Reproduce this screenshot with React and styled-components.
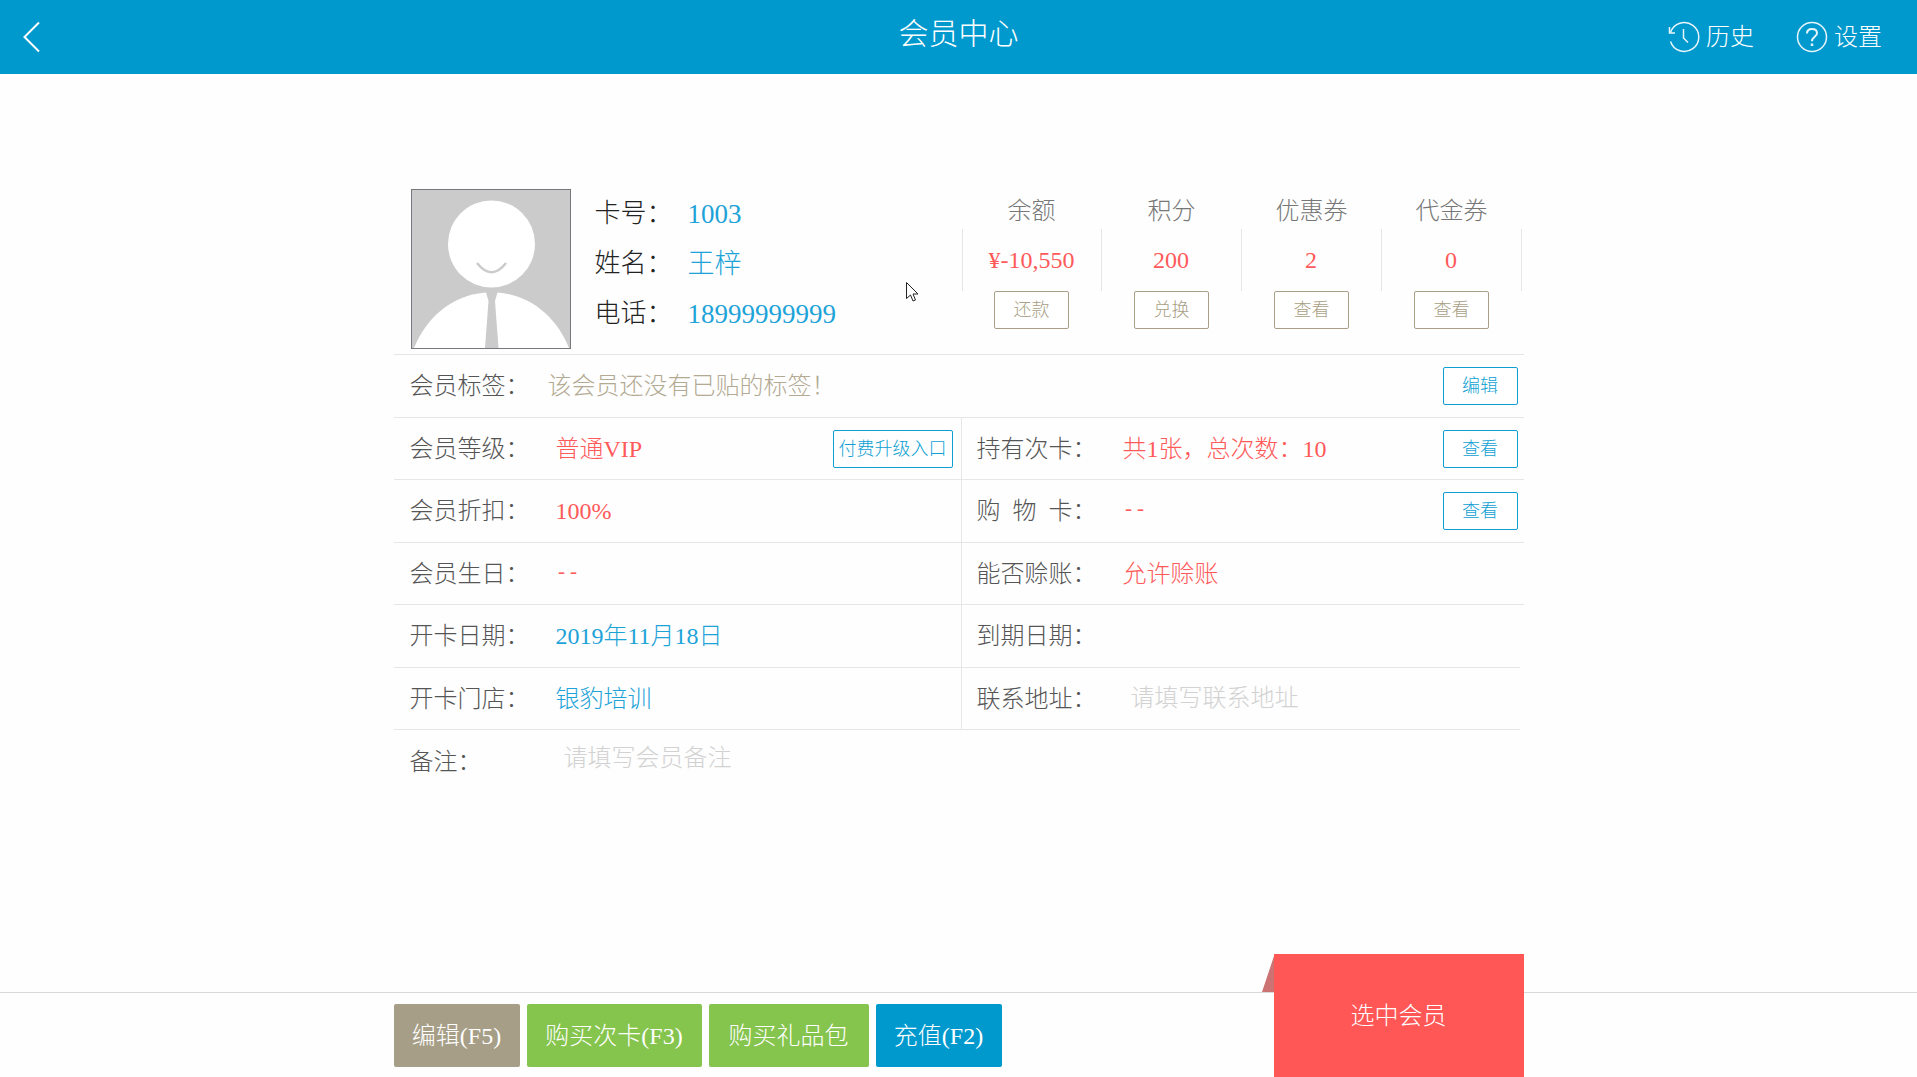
import styled, { createGlobalStyle } from "styled-components";

const GlobalStyles = createGlobalStyle`
  * {
    box-sizing: border-box;
  }
  html, body, #root {
    height: 100%;
  }
  body {
    margin: 0;
    background: #fefefe;
    color: #555;
    font-family: "Liberation Serif", "Noto Sans CJK SC", serif;
    font-size: 24px;
    font-weight: 300;
    line-height: 36px;
  }
  button, input, textarea {
    font: inherit;
    cursor: pointer;
  }
`;

const stats = [
  { title: "余额", value: "¥-10,550", action: "还款" },
  { title: "积分", value: "200", action: "兑换" },
  { title: "优惠券", value: "2", action: "查看" },
  { title: "代金券", value: "0", action: "查看" },
];

const BackIcon = () => (
  <svg width="18" height="32" viewBox="0 0 18 32" fill="none" stroke="#fff" strokeWidth="2">
    <path d="M16 1.500 1.500 16 16 30.500" />
  </svg>
);

const HistoryIcon = () => (
  <svg width="32" height="32" viewBox="0 0 32 32" fill="none" stroke="#e8f6fc" strokeWidth="1.500">
    <path d="M2.500 11.500A14.500 14.500 0 1 1 2.500 20.500" />
    <path d="M1.500 6v6h5.500" />
    <path d="M15.500 8v9l4.500 4.500" />
  </svg>
);

const HelpIcon = () => (
  <svg width="32" height="32" viewBox="0 0 32 32" fill="none" stroke="#e8f6fc" strokeWidth="1.500">
    <circle cx="16" cy="16" r="14.500" />
    <path d="M11 12.500c0-3 2-4.500 5-4.500s5 1.700 5 4.200c0 3.600-5 3.700-5 8" strokeWidth="2" />
    <path d="M16 22.500v2.500" strokeWidth="2.500" />
  </svg>
);

const Avatar = () => (
  <Photo viewBox="0 0 160 160" role="img" aria-label="会员头像">
    <rect width="160" height="160" fill="#cbcbcb" />
    <circle cx="80.500" cy="55" r="43.500" fill="#fff" />
    <path d="M66 74Q80.500 92.500 95 74" fill="none" stroke="#cbcbcb" strokeWidth="2.500" />
    <path d="M3 159C16 127 42 106 75 103.500L77.500 112 74 159Z" fill="#fff" />
    <path d="M158 159C145 127 119 106 86.500 103.500L84 112 87.500 159Z" fill="#fff" />
    <rect x="0.500" y="0.500" width="159" height="159" fill="none" stroke="#77777d" />
  </Photo>
);

const App = () => {
  return (
    <Page>
      <GlobalStyles />
      <Header>
        <IconButton aria-label="返回">
          <BackIcon />
        </IconButton>
        <Title>会员中心</Title>
        <HeaderLinks>
          <IconButton>
            <HistoryIcon />
            历史
          </IconButton>
          <IconButton>
            <HelpIcon />
            设置
          </IconButton>
        </HeaderLinks>
      </Header>

      <Main>
        <Profile>
          <Avatar />
          <Identity>
            <dt>卡号：</dt>
            <dd>1003</dd>
            <dt>姓名：</dt>
            <dd>王梓</dd>
            <dt>电话：</dt>
            <dd>18999999999</dd>
          </Identity>
          <Stats>
            {stats.map((stat) => (
              <Stat key={stat.title}>
                <span>{stat.title}</span>
                <StatValue>{stat.value}</StatValue>
                <SmallButton $color="#a89f86">{stat.action}</SmallButton>
              </Stat>
            ))}
          </Stats>
          <Pointer viewBox="0 0 13 20">
            <path d="M.5.500v16l4-3.500 2.500 6 2.500-1-2.500-6h5Z" fill="#fff" stroke="#222" />
          </Pointer>
        </Profile>

        <Row>
          <Cell>
            <TagLabel>会员标签：</TagLabel>
            <Value $color="#b3aa93">该会员还没有已贴的标签！</Value>
            <SmallButton $color="#0f9fd3">编辑</SmallButton>
          </Cell>
        </Row>
        <Row>
          <Cell>
            <Label>会员等级：</Label>
            <Value>普通VIP</Value>
            <SmallButton $color="#0f9fd3">付费升级入口</SmallButton>
          </Cell>
          <Cell>
            <Label>持有次卡：</Label>
            <Value>共1张，总次数：10</Value>
            <SmallButton $color="#0f9fd3">查看</SmallButton>
          </Cell>
        </Row>
        <Row>
          <Cell>
            <Label>会员折扣：</Label>
            <Value>100%</Value>
          </Cell>
          <Cell>
            <Label>购  物  卡：</Label>
            <Value $dash>--</Value>
            <SmallButton $color="#0f9fd3">查看</SmallButton>
          </Cell>
        </Row>
        <Row>
          <Cell>
            <Label>会员生日：</Label>
            <Value $dash>--</Value>
          </Cell>
          <Cell>
            <Label>能否赊账：</Label>
            <Value>允许赊账</Value>
          </Cell>
        </Row>
        <Row>
          <Cell>
            <Label>开卡日期：</Label>
            <Value $color="#1da3d8">2019年11月18日</Value>
          </Cell>
          <Cell $short>
            <Label>到期日期：</Label>
          </Cell>
        </Row>
        <Row>
          <Cell>
            <Label>开卡门店：</Label>
            <Value $color="#1da3d8">银豹培训</Value>
          </Cell>
          <Cell $short>
            <Label as="label" htmlFor="address">联系地址：</Label>
            <Field id="address" placeholder="请填写联系地址" />
          </Cell>
        </Row>
        <Row>
          <Cell $plain>
            <Label as="label" htmlFor="remark">备注：</Label>
            <Remark as="textarea" id="remark" placeholder="请填写会员备注" />
          </Cell>
        </Row>
      </Main>

      <Footer>
        <Actions>
          <ActionButton $color="#a69e86">编辑(F5)</ActionButton>
          <ActionButton $color="#85c44d" $width="175px">购买次卡(F3)</ActionButton>
          <ActionButton $color="#85c44d" $width="160px">购买礼品包</ActionButton>
          <ActionButton $color="#0099cd">充值(F2)</ActionButton>
          <SelectButton>选中会员</SelectButton>
        </Actions>
      </Footer>
    </Page>
  );
};

export default App;

const Page = styled.div`
  display: flex;
  flex-direction: column;
  min-height: 100%;
`;

const Header = styled.header`
  display: grid;
  grid-template-columns: 1fr auto 1fr;
  align-items: center;
  height: 74px;
  padding: 0 23px;
  background: #0099cd;
  color: #fff;
`;

const Title = styled.h1`
  margin: 0 0 6px;
  font-size: 30px;
  font-weight: 300;
`;

const HeaderLinks = styled.nav`
  display: flex;
  justify-content: flex-end;
  gap: 42px;
  padding-right: 12px;
`;

const IconButton = styled.button`
  display: flex;
  align-items: center;
  justify-self: start;
  gap: 6px;
  padding: 0;
  border: 0;
  background: none;
  color: #fff;
`;

const Main = styled.main`
  flex: 1;
  width: 100%;
  max-width: 1130px;
  margin: 0 auto;
  padding-top: 115px;
`;

const Profile = styled.section`
  position: relative;
  display: flex;
  padding: 0 2px 5px 17px;
  border-bottom: 1px solid #e6e6e6;
`;

const Photo = styled.svg`
  width: 160px;
  height: 160px;
`;

const Identity = styled.dl`
  display: grid;
  grid-template-columns: 93px auto;
  grid-auto-rows: 50px;
  align-content: start;
  align-items: center;
  margin: 0 0 0 24px;
  font-size: 26px;

  dt {
    color: #222;
  }
  dd {
    margin: 0;
    font-size: 27px;
    color: #1da3d8;
  }
`;

const Stats = styled.div`
  display: flex;
  margin-left: auto;
`;

const Stat = styled.div`
  display: flex;
  flex-direction: column;
  align-items: center;
  width: 140px;
  padding-top: 4px;
  color: #777;
`;

const StatValue = styled.strong`
  width: 100%;
  font-weight: 300;
  line-height: 62px;
  text-align: center;
  color: #ff5a5a;
  border-right: 1px solid #e6e6e6;

  ${Stat}:first-child & {
    border-left: 1px solid #e6e6e6;
  }
`;

const Pointer = styled.svg`
  position: absolute;
  top: 93px;
  left: 512px;
  width: 13px;
  height: 20px;
`;

const SmallButton = styled.button`
  flex: none;
  min-width: 75px;
  height: 38px;
  padding: 0 5px;
  border: 1px solid ${(props) => props.$color};
  border-radius: 2px;
  background: #fff;
  color: ${(props) => props.$color};
  font-size: 18px;
`;

const Row = styled.div`
  display: flex;
  height: 62px;

  &:nth-child(even) {
    height: 63px;
  }
`;

const Cell = styled.div`
  display: flex;
  flex: 1;
  align-items: center;
  padding: 0 ${(props) => (props.$short ? "0" : "6px")} 0 16px;
  margin-right: ${(props) => (props.$short ? "4px" : "0")};
  border-bottom: ${(props) => (props.$plain ? "0" : "1px solid #e6e6e6")};

  & + & {
    padding-left: 15px;
    border-left: 1px solid #e6e6e6;
  }
  &:first-child:not(:last-child) {
    flex: 0 0 567px;
    padding-right: 8px;
  }
`;

const Label = styled.span`
  flex: none;
  width: 146px;
  white-space: pre;
`;

const TagLabel = styled(Label)`
  width: 138px;
`;

const Value = styled.span`
  flex: 1;
  color: ${(props) => props.$color || "#ff5a5a"};
  ${(props) => props.$dash && `font-family: "Liberation Mono", monospace; font-size: 20px;`}
`;

const Field = styled.input`
  flex: 1;
  min-width: 0;
  height: 42px;
  padding: 0 8px;
  border: 0;
  outline: 0;
  background: none;
  color: #555;
  cursor: text;

  &::placeholder {
    color: #d2d2d2;
  }
`;

const Remark = styled(Field)`
  height: 100%;
  padding-top: 10px;
  resize: none;
`;

const Footer = styled.footer`
  height: 85px;
  border-top: 1px solid #d8d8d8;
`;

const Actions = styled.div`
  display: flex;
  gap: 7px;
  height: 100%;
  max-width: 1130px;
  margin: 0 auto;
  padding-top: 11px;
`;

const ActionButton = styled.button`
  width: ${(props) => props.$width || "126px"};
  height: 63px;
  padding: 0;
  border: 0;
  border-radius: 2px;
  background: ${(props) => props.$color};
  color: #fff;
`;

const SelectButton = styled.button`
  position: relative;
  width: 250px;
  height: 124px;
  margin: -50px 0 0 auto;
  padding: 0;
  border: 0;
  background: #ff5656;
  color: #fff;

  /* folded corner behind the ribbon */
  &::before {
    content: "";
    position: absolute;
    top: 2px;
    right: 100%;
    border-bottom: 36px solid #cd7273;
    border-left: 12px solid transparent;
  }
`;
